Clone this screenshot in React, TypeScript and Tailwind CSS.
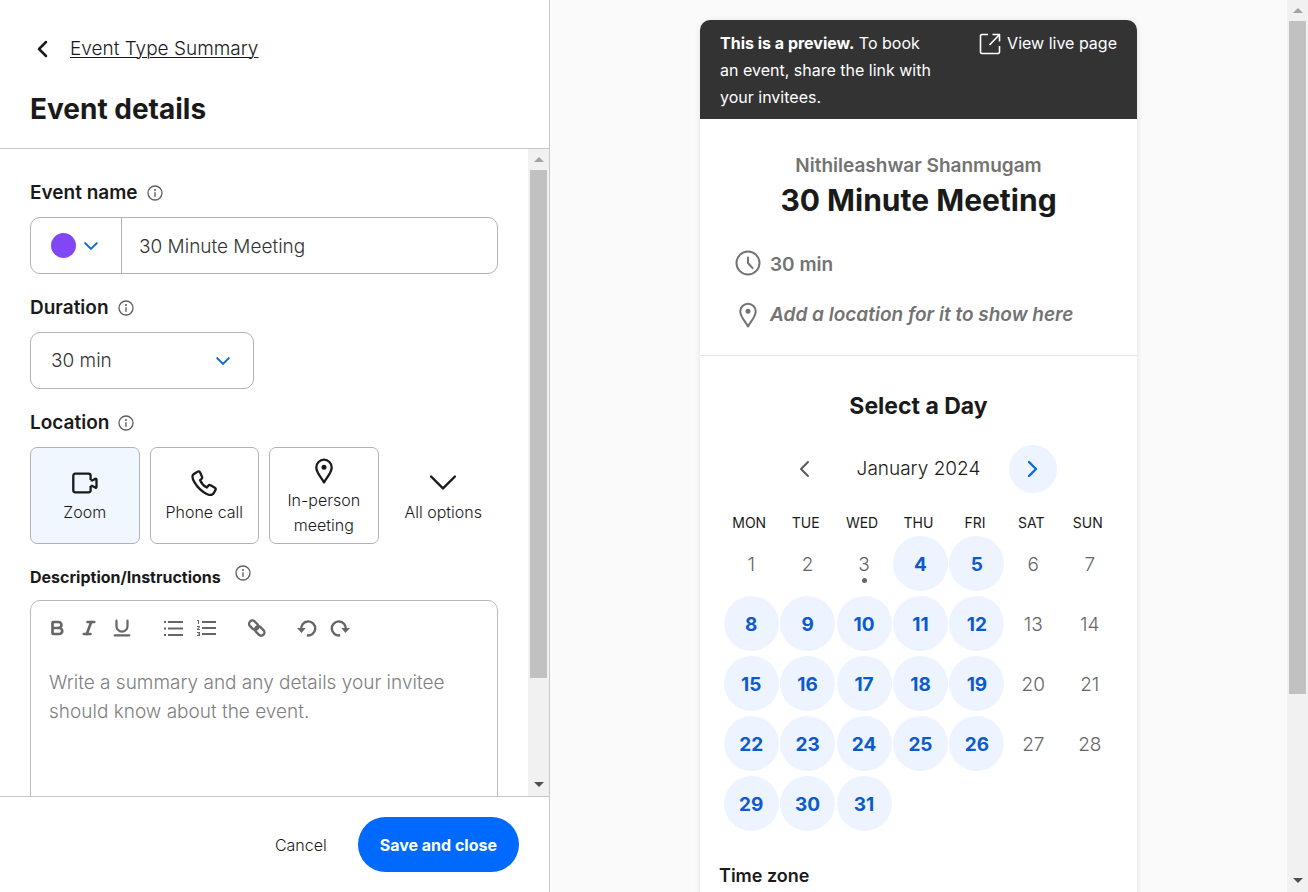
import { ReactNode } from "react";
import clsx from "clsx";
import { Bold, Italic, Underline } from "lucide-react";
import { MdFormatListNumbered } from "react-icons/md";

const WEEKDAYS = ["MON", "TUE", "WED", "THU", "FRI", "SAT", "SUN"];
const WEEKS = [0, 1, 2, 3, 4].map((week) => WEEKDAYS.map((_, day) => week * 7 + day + 1));
const TODAY = 3;

function isAvailable(day: number) {
    return day > TODAY && (day - 1) % 7 < 5;
}

function InfoIcon() {
    return (
        <svg className="size-4 text-[#5f5f5f]" viewBox="0 0 16 16" fill="none" aria-hidden="true">
            <circle cx="8" cy="8" r="7" stroke="currentColor" strokeWidth="1.3" />
            <circle cx="8" cy="4.9" r="1" fill="currentColor" />
            <path d="M8 7.2v4.6" stroke="currentColor" strokeWidth="1.4" />
        </svg>
    );
}

function ChevronIcon({ path, className }: { path: string; className: string }) {
    return (
        <svg className={className} viewBox="0 0 24 24" fill="none" stroke="currentColor" strokeLinecap="round" strokeLinejoin="round" aria-hidden="true">
            <path d={path} />
        </svg>
    );
}

function PinIcon({ className }: { className: string }) {
    return (
        <svg className={className} viewBox="0 0 26 26" fill="none" aria-hidden="true">
            <path
                d="M13 24.4C10.4 19.6 5.3 14.6 5.3 9.4a7.7 7.7 0 0 1 15.4 0c0 5.2-5.1 10.2-7.7 15Z"
                stroke="currentColor"
                strokeLinejoin="round"
            />
            <circle cx="13" cy="9.3" r="2.5" fill="currentColor" />
        </svg>
    );
}

function VideoIcon() {
    return (
        <svg className="size-[26px]" viewBox="0 0 26 26" fill="none" stroke="currentColor" strokeWidth="2.3" strokeLinejoin="round" aria-hidden="true">
            <path d="M18.6 10V5.7c0-1.2-.8-2-2-2H3.3c-1.2 0-2 .8-2 2v14.600c0 1.2.8 2 2 2h13.3c1.2 0 2-.8 2-2V16" />
            <path d="M18.6 10.400h1.700l3-1.600c.6-.3 1.200 0 1.200.7v7.400c0 .7-.6 1-1.200.7l-3-1.600h-1.700" />
        </svg>
    );
}

function PhoneIcon() {
    return (
        <svg className="size-[26px]" viewBox="0 0 26 26" fill="none" stroke="currentColor" strokeWidth="2.3" strokeLinejoin="round" aria-hidden="true">
            <path d="M6.6 1.700 2.800 4C.9 5.400 1.300 8.800 3.700 12.700c2.900 4.800 7.100 8.900 12 11.300 2.900 1.400 5.500 1.300 7-.7l1.700-3.200c.5-.9.2-1.800-.6-2.300l-4.200-2.500c-.9-.5-1.800-.3-2.400.5l-1.300 1.700c-3.300-1.700-5.500-4.200-6.800-7.300l1.300-1.200c.8-.7 1-1.600.5-2.500L9 2.300c-.5-.9-1.500-1.100-2.400-.6Z" />
        </svg>
    );
}

function ClockIcon() {
    return (
        <svg className="size-[26px] shrink-0" viewBox="0 0 26 26" fill="none" stroke="currentColor" strokeWidth="2" strokeLinecap="round" strokeLinejoin="round" aria-hidden="true">
            <circle cx="13" cy="13" r="11.5" />
            <path d="M13 7.5V13l4.6 5.2" />
        </svg>
    );
}

function ExternalIcon() {
    return (
        <svg className="size-[22px]" viewBox="0 0 22 22" fill="none" stroke="currentColor" strokeWidth="1.6" strokeLinejoin="round" aria-hidden="true">
            <path d="M9 1.500H3A1.500 1.500 0 0 0 1.500 3v16A1.500 1.500 0 0 0 3 20.500h16a1.500 1.500 0 0 0 1.500-1.500v-6" />
            <path d="M13.500 1.500h7v7M20.500 1.500l-10 10.500" />
        </svg>
    );
}

function BulletListIcon() {
    return (
        <svg className="size-5" viewBox="0 0 20 20" fill="none" stroke="currentColor" strokeWidth="2" aria-hidden="true">
            <path d="M4 4h15M4 10.500h15M4 17h15M0 4h2M0 10.500h2M0 17h2" />
        </svg>
    );
}

function LinkIcon() {
    return (
        <svg className="size-5" viewBox="0 0 20 20" fill="none" stroke="currentColor" strokeWidth="2.4" aria-hidden="true">
            <rect x="1.5" y="3.9" width="10.5" height="6.6" rx="3.3" transform="rotate(45 6.75 7.2)" />
            <rect x="7.5" y="9.7" width="10.5" height="6.6" rx="3.3" transform="rotate(45 12.75 13)" />
        </svg>
    );
}

function UndoIcon({ className }: { className?: string }) {
    return (
        <svg className={clsx("size-5", className)} viewBox="0 0 20 20" fill="none" aria-hidden="true">
            <path d="M4.3 11.5a7 7 0 1 1 5.6 5.800" stroke="currentColor" strokeWidth="2.4" />
            <path d="M0 10h8.600l-4 5Z" fill="currentColor" />
        </svg>
    );
}

interface ScrollTrackProps {
    thumbClassName: string;
}

function ScrollTrack({ thumbClassName }: ScrollTrackProps) {
    return (
        <div className="flex w-[21px] shrink-0 flex-col items-center bg-[#f1f1f1]" aria-hidden="true">
            <div className="flex h-[21px] w-full items-center justify-center">
                <svg className="h-[5px] w-[10px]" viewBox="0 0 10 5">
                    <path d="M5 0l5 5H0z" fill="#a3a3a3" />
                </svg>
            </div>
            <div className="w-full flex-1 px-[2px]">
                <div className={clsx("bg-[#c1c1c1]", thumbClassName)} />
            </div>
            <div className="flex h-6 w-full items-center justify-center">
                <svg className="h-[5px] w-[10px]" viewBox="0 0 10 5">
                    <path d="M0 0h10L5 5z" fill="#505050" />
                </svg>
            </div>
        </div>
    );
}

function FieldLabel({ htmlFor, id, children }: { htmlFor?: string; id?: string; children: ReactNode }) {
    return (
        <div className="mb-3 flex h-6 items-center gap-[9px]">
            <label htmlFor={htmlFor} id={id} className="text-[19px] leading-6 font-semibold">
                {children}
            </label>
            <InfoIcon />
        </div>
    );
}

function LocationOption({ label, icon, selected, bare }: { label: string; icon: ReactNode; selected?: boolean; bare?: boolean }) {
    return (
        <button
            type="button"
            className={clsx(
                "flex h-[97px] flex-col items-center justify-center gap-1 rounded-[7px] border pt-1 text-base leading-[25px] font-light",
                bare ? "border-transparent" : "border-[#b2b2b2]",
                selected && "bg-[#f0f7ff]"
            )}
        >
            {icon}
            <span className="px-2">{label}</span>
        </button>
    );
}

function ToolButton({ label, className, children }: { label: string; className?: string; children: ReactNode }) {
    return (
        <button type="button" aria-label={label} className={clsx("flex size-5 items-center justify-center", className)}>
            {children}
        </button>
    );
}

function DescriptionEditor() {
    return (
        <div className="rounded-t-[10px] border border-[#b9b9b9]">
            <div className="flex h-[54px] items-center pl-4 text-[#666]">
                <ToolButton label="Bold"><Bold className="size-[18px]" strokeWidth={3.5} /></ToolButton>
                <ToolButton label="Italic" className="ml-3"><Italic className="size-[18px]" strokeWidth={3.5} /></ToolButton>
                <ToolButton label="Underline" className="ml-[13px]"><Underline className="size-[22px] shrink-0" strokeWidth={2.4} /></ToolButton>
                <ToolButton label="Bulleted list" className="ml-8"><BulletListIcon /></ToolButton>
                <ToolButton label="Numbered list" className="ml-[13px]"><MdFormatListNumbered className="size-6 shrink-0" /></ToolButton>
                <ToolButton label="Insert link" className="ml-[30px]"><LinkIcon /></ToolButton>
                <ToolButton label="Undo" className="ml-[30px]"><UndoIcon /></ToolButton>
                <ToolButton label="Redo" className="ml-[13px]"><UndoIcon className="-scale-x-100" /></ToolButton>
            </div>
            <textarea
                id="description"
                placeholder="Write a summary and any details your invitee should know about the event."
                className="block h-[200px] w-full resize-none px-[18px] pt-[13px] text-[19px] leading-[29px] font-light outline-none placeholder:text-[#808080]"
            />
        </div>
    );
}

function EventForm() {
    return (
        <aside className="flex h-full w-[42%] min-w-[550px] shrink-0 flex-col border-r border-[#c9c9c9] bg-white">
            <header className="border-b border-[#c6c6c6] px-[30px] pt-[35px] pb-[21px]">
                <a href="#" className="flex h-7 items-center gap-4 text-[19px] font-light">
                    <ChevronIcon path="M16 5 9 12l7 7" className="size-6 stroke-[2.5]" />
                    <span className="underline decoration-1 underline-offset-2">Event Type Summary</span>
                </a>
                <h1 className="mt-7 text-[28px] leading-9 font-bold">Event details</h1>
            </header>

            <div className="flex min-h-0 flex-1">
                <form className="min-w-0 flex-1 overflow-y-auto px-[30px] pt-8 [scrollbar-width:none]">
                    <FieldLabel htmlFor="event-name">Event name</FieldLabel>
                    <div className="flex h-[57px] rounded-[10px] border border-[#b2b2b2]">
                        <button type="button" aria-label="Event color" className="flex w-[91px] shrink-0 items-center gap-[5px] border-r border-[#b2b2b2] pl-5">
                            <span className="size-[25px] rounded-full bg-[#8247f5]" />
                            <ChevronIcon path="M5 8.500l7 7 7-7" className="size-5 stroke-[2.4] text-[#0b69d6]" />
                        </button>
                        <input
                            id="event-name"
                            defaultValue="30 Minute Meeting"
                            className="min-w-0 flex-1 bg-transparent pt-1 pl-[17px] text-[19px] font-light text-[#333] outline-none"
                        />
                    </div>

                    <div className="mt-[22px]">
                        <FieldLabel htmlFor="duration">Duration</FieldLabel>
                        <div className="relative w-[224px]">
                            <select
                                id="duration"
                                className="h-[57px] w-full appearance-none rounded-[10px] border border-[#b2b2b2] bg-white pt-0.5 pl-5 text-[19px] font-light text-[#333]"
                            >
                                <option>30 min</option>
                            </select>
                            <ChevronIcon
                                path="M5 8.500l7 7 7-7"
                                className="pointer-events-none absolute inset-y-0 right-[21px] my-auto size-5 stroke-[2.4] text-[#0b69d6]"
                            />
                        </div>
                    </div>

                    <div className="mt-[22px]">
                        <FieldLabel id="location">Location</FieldLabel>
                        <div role="group" aria-labelledby="location" className="grid grid-cols-4 gap-[10px]">
                            <LocationOption label="Zoom" icon={<VideoIcon />} selected />
                            <LocationOption label="Phone call" icon={<PhoneIcon />} />
                            <LocationOption label="In-person meeting" icon={<PinIcon className="size-[26px] stroke-[2.3]" />} />
                            <LocationOption
                                label="All options"
                                icon={<ChevronIcon path="M1 6l11 11L23 6" className="size-[26px] stroke-[2.2]" />}
                                bare
                            />
                        </div>
                    </div>

                    <div className="mt-[21px] mb-[11px] flex h-6 items-start gap-[14px]">
                        <label htmlFor="description" className="text-base leading-6 font-bold">
                            Description/Instructions
                        </label>
                        <InfoIcon />
                    </div>
                    <DescriptionEditor />
                </form>
                <ScrollTrack thumbClassName="h-[84.4%]" />
            </div>

            <footer className="flex items-center justify-end gap-[31px] border-t border-[#c6c6c6] px-[30px] py-5">
                <button type="button" className="text-base font-light">Cancel</button>
                <button type="button" className="h-[55px] rounded-full bg-[#0069ff] px-[22px] text-base font-bold text-white">
                    Save and close
                </button>
            </footer>
        </aside>
    );
}

function Calendar() {
    return (
        <>
            <div className="mx-auto mt-[23px] flex w-[277px] items-center justify-between">
                <button type="button" aria-label="Previous month" className="flex size-12 items-center justify-center text-[#5c5c5c]">
                    <ChevronIcon path="M16 5 9 12l7 7" className="size-6 stroke-[2]" />
                </button>
                <span className="text-[19px] font-light">January 2024</span>
                <button type="button" aria-label="Next month" className="flex size-12 items-center justify-center rounded-full bg-[#edf4ff] text-[#0b69e0]">
                    <ChevronIcon path="M8 5l7 7-7 7" className="size-6 stroke-[2.4]" />
                </button>
            </div>
            <div className="pr-[19px] pl-[23px]">
                <table className="w-full table-fixed border-collapse">
                    <thead>
                        <tr>
                            {WEEKDAYS.map((day) => (
                                <th key={day} scope="col" className="pt-5 pr-1 pb-[3px] text-sm leading-5 font-normal">
                                    {day}
                                </th>
                            ))}
                        </tr>
                    </thead>
                    <tbody>
                        {WEEKS.map((week) => (
                            <tr key={week[0]}>
                                {week.map((day) => (
                                    <td key={day} className="h-[60px] p-0 align-top">
                                        {day <= 31 && (
                                            <button
                                                type="button"
                                                disabled={!isAvailable(day)}
                                                className={clsx(
                                                    "relative mx-auto flex size-[55px] items-center justify-center rounded-full pt-[3px] text-[19px]",
                                                    isAvailable(day) ? "bg-[#edf4ff] font-bold text-[#0c5acb]" : "font-light text-[#666]"
                                                )}
                                            >
                                                {day}
                                                {day === TODAY && (
                                                    <span className="absolute inset-x-0 bottom-2 mx-auto size-[5px] rounded-full bg-[#666]" />
                                                )}
                                            </button>
                                        )}
                                    </td>
                                ))}
                            </tr>
                        ))}
                    </tbody>
                </table>
            </div>
        </>
    );
}

function BookingPreview() {
    return (
        <main className="flex h-full min-w-0 flex-1 bg-[#fafafa]">
            <div className="min-w-0 flex-1 overflow-y-auto pt-5 [scrollbar-width:none]">
                <div className="mx-auto w-full max-w-[437px] rounded-t-[10px] bg-white shadow-[0_1px_6px_rgba(0,0,0,0.1)]">
                    <div className="flex gap-10 rounded-t-[10px] bg-[#333] px-5 pt-[10px] pb-2 text-base leading-[27px] text-white">
                        <p className="flex-1">
                            <strong>This is a preview.</strong> To book an event, share the link with your invitees.
                        </p>
                        <a href="#" className="flex h-[27px] shrink-0 items-center gap-[6px]">
                            <ExternalIcon />
                            View live page
                        </a>
                    </div>

                    <section className="border-b border-[#e6e6e6] px-[35px] pt-[35px] pb-[25px] text-[19px] font-semibold text-[#737373]">
                        <div className="text-center">
                            <p className="leading-6">Nithileashwar Shanmugam</p>
                            <h2 className="mt-1 text-[30px] leading-9 font-bold text-[#1a1a1a]">30 Minute Meeting</h2>
                        </div>
                        <div className="mt-8 flex items-start gap-[9px] leading-[30px]">
                            <ClockIcon />
                            <p>30 min</p>
                        </div>
                        <div className="mt-5 flex items-center gap-[9px] leading-[30px]">
                            <PinIcon className="size-[26px] shrink-0 stroke-[2]" />
                            <p className="italic">Add a location for it to show here</p>
                        </div>
                    </section>

                    <section className="pt-[34px] pb-10">
                        <h3 className="text-center text-[23px] leading-8 font-bold">Select a Day</h3>
                        <Calendar />
                        <h4 className="mt-7 pl-[19px] text-lg leading-6 font-semibold">Time zone</h4>
                    </section>
                </div>
            </div>
            <ScrollTrack thumbClassName="h-[79.4%]" />
        </main>
    );
}

export default function App() {
    return (
        <div className="flex h-screen overflow-hidden font-['Inter','Liberation_Sans',sans-serif] text-[#1a1a1a]">
            <EventForm />
            <BookingPreview />
        </div>
    );
}
